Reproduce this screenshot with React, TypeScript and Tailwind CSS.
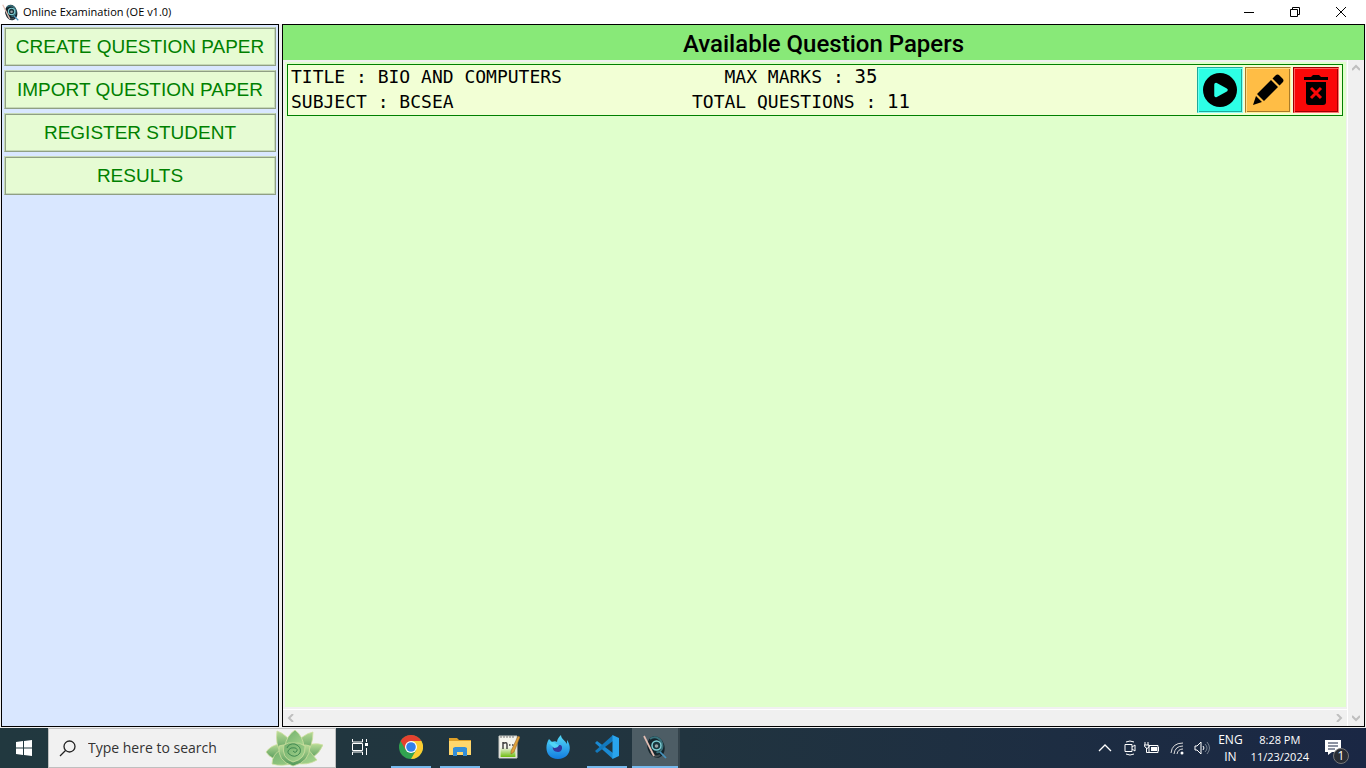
import type { ReactNode } from "react";

const actions = ["CREATE QUESTION PAPER", "IMPORT QUESTION PAPER", "REGISTER STUDENT", "RESULTS"];

function AppLogo({ className }: { className: string }) {
  return (
    <svg viewBox="0 0 24 24" className={className} aria-hidden="true">
      <ellipse cx="13" cy="12" rx="8.5" ry="11" fill="#14242b" transform="rotate(-15 13 12)" />
      <path d="M7 4c6-4 12 0 12.500 7 0 4-3 7-6 6" fill="none" stroke="#39707a" strokeWidth="2" />
      <circle cx="13.500" cy="10.500" r="4.500" fill="#18353d" stroke="#7fd0d6" strokeWidth="1.500" />
      <circle cx="13.500" cy="11" r="1.800" fill="#9aa3a5" />
      <path d="M8 17c3 5 6 5 9 3" fill="none" stroke="#434c50" strokeWidth="2" />
      <path d="M1 1l10 20" stroke="#e2bdb2" strokeWidth="1.700" />
      <path d="M17 17l6 6" stroke="#4793bd" strokeWidth="1.700" />
    </svg>
  );
}

function TaskButton({ label, bar, active, children }: { label: string; bar?: boolean; active?: boolean; children: ReactNode }) {
  return (
    <button
      aria-label={label}
      className={`flex h-10 w-12 shrink-0 items-center justify-center ${active ? "border-r-2 border-[#34434b] bg-[#4d5d65]" : ""}`}
    >
      <span className={`flex h-10 items-center justify-center border-b-2 ${active ? "w-12" : "w-10"} ${bar ? "border-[#76b9ed]" : "border-transparent"}`}>
        {children}
      </span>
    </button>
  );
}

function Chevron({ d, className }: { d: string; className: string }) {
  return (
    <svg viewBox="0 0 8 8" className={className} aria-hidden="true">
      <path d={d} fill="none" stroke="#bfbfbf" strokeWidth="2" />
    </svg>
  );
}

export default function App() {
  return (
    <div className="flex min-h-screen flex-col bg-[#f0f0f0] font-['Liberation_Sans',sans-serif] text-black">
      <header className="flex h-6 items-center bg-white pr-0.5 pl-0.5">
        <AppLogo className="size-[17px]" />
        <h1 className="ml-1 grow font-['Open_Sans','Noto_Sans',sans-serif] text-[11px]">Online Examination (OE v1.0)</h1>
        <div className="flex h-5 items-center">
          <button aria-label="Minimize" className="flex w-[46px] justify-center">
            <svg viewBox="0 0 10 10" className="size-2.5"><path d="M0 5.5h10" stroke="#000" /></svg>
          </button>
          <button aria-label="Restore" className="flex w-[46px] justify-center">
            <svg viewBox="0 0 10 10" className="size-2.5"><path d="M.5 2.5h7v7h-7zM2.5 2.5v-2h7v7h-2" fill="none" stroke="#000" /></svg>
          </button>
          <button aria-label="Close" className="flex w-[46px] justify-center">
            <svg viewBox="0 0 10 10" className="size-2.5"><path d="M0 0l10 10M10 0L0 10" stroke="#000" /></svg>
          </button>
        </div>
      </header>

      <div className="flex grow gap-[3px] px-px pb-px">
        <nav className="flex w-[278px] shrink-0 flex-col gap-1 border border-black bg-[#d9e7ff] p-0.5">
          {actions.map((a) => (
            <button
              key={a}
              className="h-[39px] border border-t-[#c6d9b6] border-r-[#8f9f84] border-b-[#8f9f84] border-l-[#c6d9b6] bg-[#e6fbd3] text-[19px] leading-6 whitespace-nowrap text-[#008000] shadow-[inset_1px_1px_#8f9f84,inset_-1px_-1px_#c6d9b6]"
            >
              {a}
            </button>
          ))}
        </nav>

        <main className="flex min-w-0 grow flex-col border border-black">
          <h2 className="flex h-[35px] items-center justify-center bg-[#88e978] pt-0.5 font-[Roboto,sans-serif] text-2xl font-medium">
            Available Question Papers
          </h2>
          <div className="flex grow">
            <div className="flex min-w-0 grow flex-col">
              <section className="m-0.5 mr-px grow bg-[#e0ffcc] p-0.5 pr-[3px]">
                <article className="flex h-[52px] items-center border border-[#008000] bg-[#f2ffd5] px-[3px] font-['DejaVu_Sans_Mono',monospace] text-lg leading-[25px]">
                  <div className="w-[369px] pb-0.5">
                    <p>TITLE : BIO AND COMPUTERS</p>
                    <p>SUBJECT : BCSEA</p>
                  </div>
                  <div className="grow pb-0.5">
                    <div className="w-fit pl-8 text-center">
                      <p>MAX MARKS : <span className="text-[19px]">35</span></p>
                      <p>TOTAL QUESTIONS : <span className="text-[19px]">11</span></p>
                    </div>
                  </div>
                  <div className="flex gap-0.5">
                    <button aria-label="Start" className="flex size-[46px] items-center justify-center border border-t-[#1fa99b] border-r-[#8afff3] border-b-[#8afff3] border-l-[#1fa99b] bg-[#2dffe6] shadow-[inset_1px_1px_#6ffff0,inset_-1px_-1px_#1fa99b]">
                      <svg viewBox="0 0 34 34" className="size-[34px]"><circle cx="17" cy="17" r="17" fill="#000" /><path d="M13 11.500l10 5.500-10 5.500z" fill="#2dffe6" stroke="#2dffe6" strokeWidth="3.500" strokeLinejoin="round" /></svg>
                    </button>
                    <button aria-label="Edit" className="flex size-[46px] items-center justify-center border border-t-[#a87b29] border-r-[#ffee99] border-b-[#ffee99] border-l-[#a87b29] bg-[#ffbd45] shadow-[inset_1px_1px_#ffdc85,inset_-1px_-1px_#a87b29]">
                      <svg viewBox="0 0 32 32" className="size-8"><path d="M19 6l7 7L12 27l-7-7zM20.500 4.500l3-3q2-2 4 0l3 3q2 2 0 4l-3 3zM4 22l6 6-9 3z" /></svg>
                    </button>
                    <button aria-label="Delete" className="flex size-[46px] items-center justify-center border border-t-[#a00000] border-r-[#ff7474] border-b-[#ff7474] border-l-[#a00000] bg-[#fa0808] shadow-[inset_1px_1px_#ff6060,inset_-1px_-1px_#a00000]">
                      <svg viewBox="0 0 24 30" className="h-[30px] w-6"><path d="M0 2h7l2-2h6l2 2h7v3H0zM2 7h20v20q0 3-3 3H5q-3 0-3-3z" /><path d="M7 13l10 10M17 13L7 23" stroke="#fa0808" strokeWidth="3" /></svg>
                    </button>
                  </div>
                </article>
              </section>
              <div className="flex h-[17px] items-center justify-between border-t border-white px-1">
                <Chevron d="M6 0L2 4l4 4" className="size-2" />
                <Chevron d="M2 0l4 4-4 4" className="size-2" />
              </div>
            </div>
            <div className="flex w-[17px] flex-col items-center justify-between border-l border-white py-1">
              <Chevron d="M0 6l4-4 4 4" className="size-2" />
              <Chevron d="M0 2l4 4 4-4" className="size-2" />
            </div>
          </div>
        </main>
      </div>

      <footer className="flex h-10 items-center bg-linear-to-r from-[#21383f] via-[#21343f] to-[#1a2744] font-['Open_Sans','Noto_Sans',sans-serif] text-white">
        <button aria-label="Start menu" className="flex h-10 w-12 items-center justify-center">
          <svg viewBox="0 0 16 16" className="size-4"><path d="M0 2l7-1v6.500H0zM8 1l8-1v7.500H8zM0 8.500h7V15l-7-1zM8 8.500h8V16l-8-1z" fill="#fff" /></svg>
        </button>
        <label className="flex h-10 w-72 items-center border border-[#bfbfbf] bg-[#f1f1f1] pr-3 pl-2.5 text-[#222]">
          <svg viewBox="0 0 17 17" className="mr-3 size-[17px] shrink-0"><circle cx="10.5" cy="6.5" r="5.5" fill="none" stroke="#222" strokeWidth="1.3" /><path d="M6.5 10.5L1 16" stroke="#222" strokeWidth="1.3" /></svg>
          <input aria-label="Search" placeholder="Type here to search" className="w-0 grow bg-transparent text-sm outline-none placeholder:text-[#333]" />
          <svg viewBox="0 0 58 37" className="h-[37px] w-[58px] shrink-0">
            <defs>
              <linearGradient id="leaf" x1="0" y1="0" x2="0" y2="1"><stop stopColor="#b9dc96" /><stop offset="1" stopColor="#4f9658" /></linearGradient>
              <linearGradient id="petal" x1="0" y1="0" x2="1" y2="1"><stop stopColor="#6fae6b" /><stop offset="1" stopColor="#a9d68f" /></linearGradient>
            </defs>
            <g stroke="#cfe0a0" strokeWidth=".8">
              <path d="M1 22Q6 15 15 14l8 13-5 3Q6 30 1 22zM58 15q-11-4-20 4l-4 11q17 1 24-15z" fill="url(#leaf)" />
              <path d="M7 34Q7 24 17 19l12 14Q18 37 7 34zM52 30L42 18 30 33q12 3 22-3z" fill="url(#petal)" />
              <path d="M12 1Q10 14 16 23l13-6Q22 4 12 1zM48 2q0 14-7 22l-12-7Q37 4 48 2z" fill="url(#leaf)" />
              <path d="M30 0Q21 6 20 17h19Q38 6 30 0z" fill="url(#petal)" />
              <path d="M14 16q-2 15 14 20 17-4 17-20-8-3-15 2-8-5-16-2z" fill="url(#leaf)" />
              <path d="M19 15q-3 13 9 17 13-3 12-16-6-4-11-3-6-1-10 2z" fill="url(#petal)" />
            </g>
            <path d="M22 18q2-5 8-4 7 3 5 9-5 6-11 1-3-3 2-6 7-1 6 3-2 3-4 0" fill="none" stroke="#3f8850" />
          </svg>
        </label>
        <div className="flex grow items-center gap-px">
          <TaskButton label="Task view">
            <svg viewBox="0 0 16 16" className="size-4"><path d="M.5 0v3h10V0M.5 16v-3h10v3M.5 4.5h10v7H.5zM14.5 0v3M14.5 9v7" fill="none" stroke="#fff" /><path d="M13 4h3v3h-3z" fill="#fff" /></svg>
          </TaskButton>
          <span className="w-px" />
          <TaskButton label="Chrome" bar>
            <svg viewBox="0 0 24 24" className="size-6"><circle cx="12" cy="12" r="12" fill="#31a350" /><path d="M1.6 6a12 12 0 0 1 20.8 0L12 12z" fill="#e5412f" /><path d="M22.4 6A12 12 0 0 1 12 24l5.2-9L12 6z" fill="#fdcc31" /><path d="M1.6 6l5.2 9L12 6z" fill="#e5412f" /><circle cx="12" cy="12" r="6" fill="#fff" /><circle cx="12" cy="12" r="4.8" fill="#3480e9" /></svg>
          </TaskButton>
          <TaskButton label="File Explorer" bar>
            <svg viewBox="0 0 22 20" className="h-5 w-[22px]"><path d="M0 1h8l2 2h12v15H0z" fill="#dfa128" /><path d="M0 4h22v14H0z" fill="#ffd76c" /><path d="M4 19v-8l2-1h10l2 1v8h-4v-4H8v4z" fill="#348ed7" /></svg>
          </TaskButton>
          <TaskButton label="Notepad++">
            <svg viewBox="0 0 22 24" className="h-6 w-[22px]">
              <defs><linearGradient id="page" x1="0" y1="0" x2="0" y2="1"><stop offset=".45" stopColor="#f5f5ee" /><stop offset="1" stopColor="#6fbd10" /></linearGradient></defs>
              <path d="M1 1h18v22H1z" fill="#f5f5ee" stroke="#c9cac5" /><path d="M2.500 4h15v18h-15z" fill="url(#page)" /><path d="M3 1v2M6 1v2M9 1v2M12 1v2M15 1v2" stroke="#777" /><path d="M5 14V7M5 8.500q4-2 4 1V14M11 10h1.500M14 10h1.500" fill="none" stroke="#444" strokeWidth="1.500" /><path d="M20 1l2 1-6 15-3 2v-3z" fill="#dfa23b" stroke="#8b5720" strokeWidth=".5" /></svg>
          </TaskButton>
          <TaskButton label="Firefox">
            <svg viewBox="0 0 24 24" className="size-6">
              <defs><linearGradient id="fox" x1="0" y1="0" x2="0" y2="1"><stop stopColor="#55dcf8" /><stop offset="1" stopColor="#127be0" /></linearGradient></defs>
              <path d="M3 4l3 3c2-1 4-1 5 0 0-3 2-5 4-7 0 4 4 5 6 9V5c6 8 2 19-9 19C0 24-2 12 3 4z" fill="url(#fox)" />
              <path d="M7 11q5-1 7-1c3 0 3 7-2 7-4 0-6-3-5-6z" fill="#34379f" />
              <path d="M3 8q4-3 7 1l3 1q-1 3-5 3" fill="#50d5f7" />
            </svg>
          </TaskButton>
          <TaskButton label="Visual Studio Code" bar>
            <svg viewBox="0 0 24 24" className="size-6"><path d="M0 8l2-2 16 12v6z" fill="#1a8ad3" /><path d="M0 16l2 2L18 6V0z" fill="#1279bd" /><path d="M17.500 0L24 3v18l-6.500 3z" fill="#29a4ed" /></svg>
          </TaskButton>
          <TaskButton label="Online Examination" bar active>
            <AppLogo className="size-6" />
          </TaskButton>
        </div>
        <div className="flex items-center gap-2 pr-[17px]">
          <svg viewBox="0 0 14 14" className="mr-1 size-3.5"><path d="M1 10l6-6 6 6" fill="none" stroke="#fff" strokeWidth="1.3" /></svg>
          <svg viewBox="0 0 12 16" className="h-4 w-3"><path d="M2 2q4-2 8 0M2 14q4 2 8 0M1 4.500h7v7H1zM8 7l3-2v6l-3-2" fill="none" stroke="#fff" /></svg>
          <svg viewBox="0 0 16 12" className="h-3 w-4"><path d="M5 3.500h9v7H5zM14.500 5v4M1 0v3M4 0v3M0 3h5v2q-2 3-4 0zM2.500 6v4.500H5" fill="none" stroke="#fff" /><path d="M7 5h6v4H7z" fill="#fff" /></svg>
          <svg viewBox="0 0 14 14" className="mx-0.5 size-3.5"><path d="M1 12Q2 2 13 2M4 13Q5 5 13 5M7 13q1-5 6-5" fill="none" stroke="#ddd" /><circle cx="12" cy="12" r="1.500" fill="#fff" /></svg>
          <svg viewBox="0 0 16 14" className="h-3.5 w-4"><path d="M1 5h2l4-4v12L3 9H1zM9 5q2 2 0 4" fill="none" stroke="#fff" /><path d="M11 3q4 4 0 8M13 1q5 6 0 12" fill="none" stroke="#75808e" /></svg>
          <div className="text-center text-[12px] leading-[17px]"><p>ENG</p><p>IN</p></div>
          <div className="text-center text-[11px] leading-[17px]"><p>8:28 PM</p><p>11/23/2024</p></div>
          <button aria-label="Notifications" className="ml-2 pt-2">
            <svg viewBox="0 0 24 24" className="size-6"><path d="M0 0h16v12H7l-4 3v-3H0z" fill="#fff" /><path d="M3 3h10M3 6h10M3 9h7" stroke="#1a2744" /><circle cx="16" cy="16" r="7.500" fill="#292d35" stroke="#777" /><text x="16" y="20" textAnchor="middle" fontSize="12" fill="#fff">1</text></svg>
          </button>
        </div>
      </footer>
    </div>
  );
}
